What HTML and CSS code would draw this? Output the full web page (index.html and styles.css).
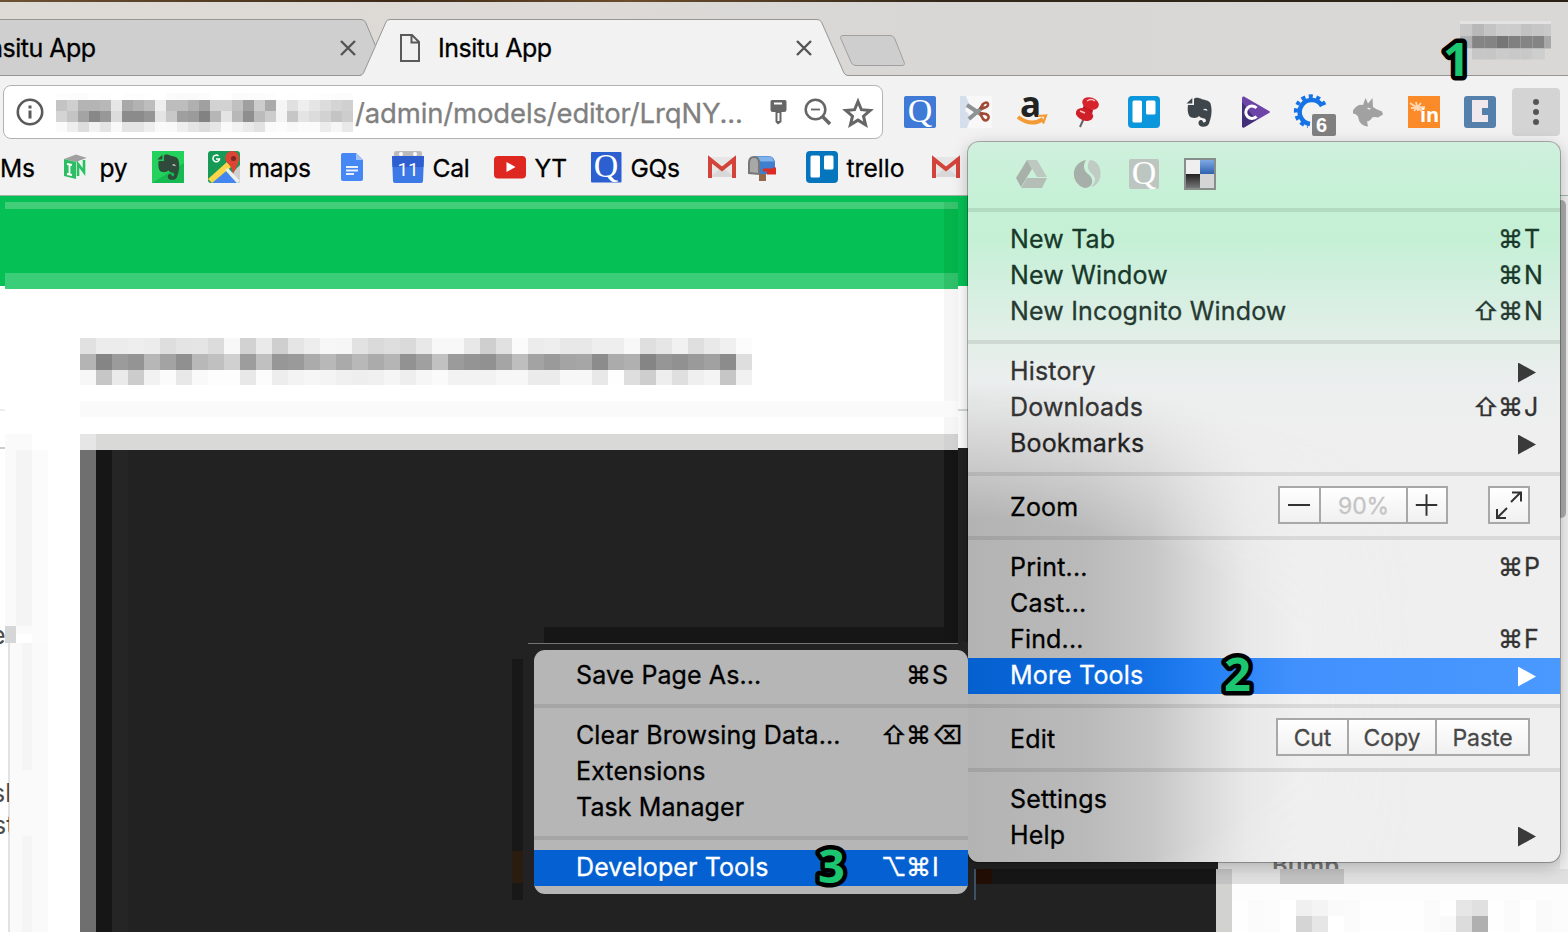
FILE: index.html
```html
<!DOCTYPE html>
<html lang="en">
<head>
<meta charset="utf-8">
<title>Insitu App</title>
<link rel="stylesheet" href="styles.css">
</head>
<body>
<svg class="defs" width="0" height="0">
  <defs>
    <symbol id="gmail" viewBox="0 0 32 32"><rect x="3" y="6" width="26" height="20" fill="#e6e6e6"/><path d="M4 26 L16 16 L28 26Z" fill="#d8d8d8"/><path d="M4 27V8.500l12 9.500L28 8.500v18.500" fill="none" stroke="#d3433a" stroke-width="4"/></symbol>
    <symbol id="trello" viewBox="0 0 32 32"><rect width="32" height="32" rx="4" fill="currentColor"/><rect x="4.500" y="4.500" width="9.500" height="22" rx="1.500" fill="#fff"/><rect x="18" y="4.500" width="9.500" height="14" rx="1.500" fill="#fff"/></symbol>
    <symbol id="elephant" viewBox="0 0 32 32"><path d="M9 3v6H3C2 15 3.500 21 6.500 21.500c3 .8 6 .4 7.500-1.500 1.500 2 3.500 2 5.500 2.500 2 .8 2 4-.5 4-1.500 0-1-3-3.500-2.500-3 .6-2.500 6 .8 6.500 3 .6 6.700 0 7.700-3C26.500 21 27.500 14 25.500 7.500 24.500 4.500 20 4 17 3.200 14 1.500 10 1 9 3Z"/><path d="M1.500 7.500 7.300 2v5.500Z"/><path d="M18 14c2-2 4-1.500 4.500 1-1.500-.8-3-.8-4.500-1Z" fill="#eee"/></symbol>
  </defs>
</svg>
<div class="browser">
  <div class="desktop"></div>
  <div class="tabstrip">
    <svg class="tab-shapes" width="1568" height="74" viewBox="0 2 1568 74">
      <path d="M-2 19.500H361Q364 19.500 365.500 22L388 75.500H-2Z" fill="#cfcfcf" stroke="#969696"/>
      <path d="M359 76.500Q362 76 363.500 73L386 22Q387 19.500 390 19.500H817Q820 19.500 821.500 22L844 73Q845.500 75.500 848 75.500H1568V78H359Z" fill="#f2f2f2"/>
      <path d="M0 75.500H359Q362 75.500 363.500 73L386 22Q387 19.500 390 19.500H817Q820 19.500 821.500 22L844 73Q845.500 75.500 848 75.500H1568" fill="none" stroke="#959595"/>
      <path d="M843 35.500H890Q893 35.500 894.500 38L904 62Q905.500 65.500 902 65.500H856Q853 65.500 851.500 63L841 39Q839.500 35.500 843 35.500Z" fill="#cecece" stroke="#a0a0a0"/>
      <path d="M341 41l14 14M355 41l-14 14M797 41l14 14M811 41l-14 14" stroke="#555" stroke-width="2.400"/>
      <path d="M401 35H412L419 42V61H401ZM411.500 35V42.500H419" fill="none" stroke="#5a5a5a" stroke-width="2"/>
    </svg>
    <span class="tab tab-back">Insitu App</span>
    <span class="tab tab-front">Insitu App</span>
    <svg class="profile" width="92" height="42" data-w="12.1"><rect y="0" width="91" height="3" fill="#e3e3e3"/>
      <g data-y="3" data-h="12" data-shades="c8 b8 c4 cc cc c2 c6"></g><rect x="84" y="3" width="7" height="12" fill="#c9c9c9"/>
      <g data-y="15" data-h="12.5" data-shades="b0 84 84 76 80 84 84"></g><rect x="84" y="15" width="7" height="12.500" fill="#a8a8a8"/>
      <g data-y="27.5" data-h="11" data-shades="d8 c6 c6 cb c8 c8 ce"></g></svg>
  </div>
  <div class="toolbar">
    <div class="omnibox">
      <svg width="28" height="28" viewBox="0 0 28 28"><circle cx="14" cy="14" r="12.200" fill="none" stroke="#5a5a5a" stroke-width="2.600"/><path d="M12.500 7.500h3v3h-3zM12.500 12.500h3v8h-3z" fill="#5a5a5a"/></svg>
      <svg class="host" width="297" height="40" data-w="11">
        <g data-y="0" data-h="7" data-shades="fd fc fc fe fd ff fd fd fe ff fb fa fa fc ff fe fb fb fc fd ff fe ff fe fd fc fc"></g>
        <g data-y="7" data-h="11" data-shades="c4 cf b4 b4 b8 e6 a8 b2 bd ee bd bd b0 a0 d2 d2 c0 a0 cc aa f5 e0 ee e5 dc d4 d0"></g>
        <g data-y="18" data-h="11" data-shades="d4 c4 a4 88 98 dc 8b 8b 95 e4 c8 9f 9b 82 b6 e4 b8 8e bb cc f4 c6 e4 dc d2 c4 cd"></g>
        <g data-y="29" data-h="10" data-shades="fb ee dd f2 e4 f9 e4 e4 ee fa f9 ee e4 dc e6 fa f2 ea e2 fa fc f8 fb fb ec f6 e9"></g></svg>
      <span class="url">/admin/models/editor/LrqNY...</span>
      <svg class="omni-icons" width="110" height="32" viewBox="766 97 110 32">
        <path d="M771 100h14q1.500 0 1.500 1.500v8q0 2.500-2.500 2.500h-2.500v10l-3.500 2.500-2.500-2.500v-10h-2.500q-2.500 0-2.500-2.500v-8q0-1.500 1.500-1.500Z" fill="#666"/><path d="M774 103.500h8M778.500 113v8" stroke="#fff" stroke-width="2"/>
        <circle cx="815.500" cy="109.500" r="9.800" fill="none" stroke="#666" stroke-width="2.500"/><path d="M822.500 116.500l7.500 7.500" stroke="#666" stroke-width="3.500"/><path d="M811 109.500h9" stroke="#666" stroke-width="1.800"/>
        <path d="M858 101.500l3.400 8.200 8.800.7-6.700 5.800 2.100 8.600-7.600-4.700-7.600 4.700 2.100-8.600-6.700-5.800 8.800-.7Z" fill="none" stroke="#666" stroke-width="3"/>
      </svg>
    </div>
    <svg class="ext" viewBox="0 0 32 32"><rect width="32" height="32" rx="2" fill="#3f7ad6"/><text x="16" y="25.500" text-anchor="middle" class="serif-q">Q</text></svg>
    <svg class="ext" viewBox="0 0 32 32"><rect width="32" height="32" fill="#f8f8f8"/><path d="M0 0h6l3 8-4 6 6 7-4 11H0Z" fill="#d5dfec"/><path d="M7 9l15 10M9 23l15-13" stroke="#8d9295" stroke-width="4"/><path d="M20 17l6 1q4 2 2 5t-5 0l-3-6M20 13l3-5q4-3 5 0t-7 5" fill="none" stroke="#a24a35" stroke-width="2.600"/></svg>
    <svg class="ext" viewBox="0 0 32 32"><text x="14.500" y="20.500" text-anchor="middle" class="amazon">a</text><path d="M2 21q13 10 25 2" fill="none" stroke="#f39a34" stroke-width="4"/><path d="M22 20l8-.5-3 8" fill="none" stroke="#f39a34" stroke-width="2.200"/></svg>
    <svg class="ext" viewBox="0 0 32 32"><path d="M12 22L8 31" stroke="#666" stroke-width="2"/><path d="M12 9l9 5-2 8-10-6Z" fill="#b81420"/><ellipse cx="12.500" cy="18.500" rx="9" ry="6" transform="rotate(22 12.500 18.500)" fill="#cf2029"/><ellipse cx="18.500" cy="7.500" rx="8.500" ry="6" transform="rotate(18 18.500 7.500)" fill="#d7232c"/><path d="M15 5q4-3 8 0M8 15l5 2" fill="none" stroke="#ffc3c3" stroke-width="1.500"/></svg>
    <svg class="ext blue"><use href="#trello"/></svg>
    <svg class="ext slate" viewBox="-1 0 32 32"><use href="#elephant" width="32" height="32"/></svg>
    <svg class="ext" viewBox="0 0 32 32"><path d="M2 2q0-2 2-1.500L29 15q2 1 0 2L4 31.500q-2 .5-2-1.500Z" fill="#6d44a8"/><path d="M2 6V30q0 2 2 1.500L16 24Z" fill="#432f78"/><path d="M16.500 12a6.200 6.200 0 1 0 0 8.500" fill="none" stroke="#fff" stroke-width="3"/></svg>
    <svg class="ext" viewBox="0 0 32 32"><path d="M26 10A12 12 0 1 0 14 28" fill="none" stroke="#1673e6" stroke-width="4.500"/><path d="M28.500 9A15 15 0 1 0 12 30" fill="none" stroke="#1673e6" stroke-width="4" stroke-dasharray="4 3.500"/><rect x="16" y="18" width="24" height="22" rx="2" fill="#808080"/><text x="25.500" y="36" text-anchor="middle" class="badge">6</text></svg>
    <svg class="ext" viewBox="0 0 32 32"><path d="M1 14.500Q5 8 11 9L13.500 2l2.500 5.500L20.500 2l.5 9q3 2.500 9 4.500l1 3-5 3q-3-1-6 0-1 3-5 4l1 5q-9-1-10-10Q4 17.500 1 17.500Z" fill="#a1a1a1"/><path d="M15 12.500q2-1.500 4 .5-2 1-4-.5Z" fill="#eee"/></svg>
    <svg class="ext" viewBox="0 0 32 32"><rect width="32" height="32" fill="#fb8a29"/><text x="21.500" y="26" text-anchor="middle" class="inmark">in</text><path d="M2 7l12 8M6 15l7-8M3 12l14-1M8 6l2 9" stroke="#ffd9b4" stroke-width="1.800"/></svg>
    <svg class="ext" viewBox="0 0 32 32"><rect width="32" height="32" rx="3" fill="#5580ab"/><path d="M8 4H24V12H18V19H24V26H8Z" fill="#f1e8ee"/></svg>
    <div class="menu-button"><i></i><i></i><i></i></div>
  </div>
  <div class="bookmarks">
    <span class="bm">Ms</span>
    <span class="bm"><svg viewBox="0 0 32 32"><path d="M5 8L17 3.500l11 3.500-11 4Z" fill="#a0a0a0"/><path d="M5 8l12 3v17L5 25Z" fill="#2dbd62"/><path d="M17 11l11-4v16l-11 5Z" fill="#e9f7ee"/><path d="M8 13l5 1M10.500 14v9M8 23l5 1" stroke="#fff" stroke-width="1.800"/><path d="M19 25V13l6 8V9" fill="none" stroke="#2dbd62" stroke-width="2.600"/></svg>py</span>
    <span class="bm"><svg viewBox="0 0 32 32"><rect width="32" height="32" fill="#25d15d"/><path d="M0 32L32 12V32Z" fill="#15bb50"/><svg x="4" y="2" width="28" height="28" class="dark"><use href="#elephant"/></svg></svg></span>
    <span class="bm"><svg viewBox="0 0 32 32"><rect width="32" height="32" rx="3" fill="#179a56"/><path d="M32 14L14 32H29Q32 32 32 29Z" fill="#cfcfcf"/><path d="M16 18L29 32H3Z" fill="#4386f0"/><path d="M0 28L19 11l4 5L4 32Z" fill="#f9d648"/><path d="M17 19l12 13 3-2-12-13Z" fill="#eee"/><path d="M25 23q-1-7-4.500-10A7 7 0 1 1 31 9q-1 5-6 14Z" fill="#dc4436"/><circle cx="25.500" cy="7.500" r="2.500" fill="#7a2820"/><path d="M10.500 5A3.300 3.300 0 1 0 11.500 8H8" fill="none" stroke="#fff" stroke-width="1.500"/></svg>maps</span>
    <span class="bm"><svg viewBox="0 0 32 32"><path d="M7 2H20l7 7V28q0 2-2 2H7q-2 0-2-2V4q0-2 2-2Z" fill="#4587f4"/><path d="M20 2v7h7Z" fill="#a3c3f8"/><path d="M10 16h12M10 19.500h12M10 23h8" stroke="#e8f0fe" stroke-width="1.800"/></svg></span>
    <span class="bm"><svg viewBox="0 0 32 32"><rect x="2" width="28" height="7" rx="2" fill="#bcbcbc"/><path d="M0 5H32L31 30q0 2-2 2H3q-2 0-2-2Z" fill="#3c78e6"/><path d="M0 5H32L31.500 16H.5Z" fill="#2d5fd0"/><circle cx="9" cy="3" r="2" fill="#fff"/><circle cx="23" cy="3" r="2" fill="#fff"/><text x="16" y="25" text-anchor="middle" class="date">11</text></svg>Cal</span>
    <span class="bm"><svg viewBox="0 0 32 32"><rect y="5" width="32" height="22.500" rx="4" fill="#de2721"/><path d="M12.500 11v10l9-5Z" fill="#fff"/></svg>YT</span>
    <span class="bm"><svg viewBox="0 0 32 32"><rect x="1" y="1" width="30.500" height="30.500" rx="1" fill="#2c5fcf"/><text x="16" y="25.500" text-anchor="middle" class="serif-q">Q</text></svg>GQs</span>
    <span class="bm"><svg><use href="#gmail"/></svg><svg class="mailbox" viewBox="0 0 32 32"><path d="M12 22h7v8h-7Z" fill="#94694a"/><path d="M7 5H21q7 0 7 8v10H12Z" fill="#3f7fcd"/><path d="M8 5.500H21q5 0 6 5H14Z" fill="#7fb2ea"/><path d="M1 23V12q0-7 6-7t6 7V24Z" fill="#777"/><path d="M3 21V12q0-5 4-5t4 5v10Z" fill="#a8a8a8"/><path d="M16 17.500h10v-1h3v7H20v-3h-4Z" fill="#dd2a22"/></svg></span>
    <span class="bm"><svg class="deep"><use href="#trello"/></svg>trello</span>
    <span class="bm"><svg><use href="#gmail"/></svg></span>
  </div>
  <div class="page">
    <svg class="content" width="1568" height="736" viewBox="0 196 1568 736" shape-rendering="crispEdges">
      <rect y="196" width="1568" height="90" fill="#05c155"/>
      <rect x="944" y="202" width="14" height="71" fill="#04b54b"/>
      <rect x="5" y="202" width="953" height="7" fill="#42ce79"/><rect x="944" y="202" width="14" height="7" fill="#38c26d"/>
      <rect x="5" y="273" width="953" height="16" fill="#3bce78"/><rect x="944" y="273" width="14" height="16" fill="#30c069"/>
      <rect x="944" y="289" width="14" height="145" fill="#f6f6f6"/>
      <rect x="80" y="401" width="878" height="16" fill="#fafafa"/>
      <rect y="409" width="5" height="2" fill="#eee"/><rect y="447" width="5" height="2" fill="#ccc"/><rect x="958" y="409" width="10" height="2" fill="#d8d8d8"/>
      <rect x="5" y="434" width="27" height="200" fill="#fafafa"/><rect x="16" y="450" width="16" height="176" fill="#f4f4f4"/><rect x="32" y="450" width="16" height="482" fill="#fbfbfb"/>
      <rect x="10" y="643" width="38" height="289" fill="#fafafa"/><rect x="22" y="643" width="10" height="127" fill="#f5f5f5"/><rect x="22" y="836" width="10" height="96" fill="#f5f5f5"/><rect x="8" y="643" width="2" height="289" fill="#e2e2e2"/>
      <rect x="80" y="434" width="878" height="16" fill="#d9d9d8"/><rect x="80" y="434" width="16" height="16" fill="#e6e6e6"/><rect x="944" y="434" width="14" height="16" fill="#d2d2d2"/>
      <rect x="80" y="450" width="1138" height="482" fill="#222"/><rect x="958" y="448" width="260" height="484" fill="#222"/>
      <rect x="80" y="450" width="16" height="482" fill="#6f6f6f"/><rect x="96" y="450" width="16" height="482" fill="#161616"/><rect x="112" y="450" width="16" height="482" fill="#252525"/>
      <rect x="944" y="450" width="14" height="193" fill="#151515"/>
      <rect x="544" y="627" width="400" height="16" fill="#161616"/><rect x="528" y="643" width="430" height="1" fill="#747474"/>
      <rect x="512" y="659" width="11" height="241" fill="#181818"/><rect x="512" y="851" width="11" height="32" fill="#2a1c0e"/>
      <rect x="974" y="869" width="242" height="15" fill="#161616"/><rect x="976" y="869" width="16" height="15" fill="#230e05"/><rect x="974" y="869" width="1.500" height="31" fill="#3d5267"/>
      <rect x="1218" y="450" width="350" height="482" fill="#fff"/><rect x="1218" y="855" width="350" height="14" fill="#e4e4e4"/>
      <rect x="1560" y="196" width="8" height="673" fill="#efefef"/>
      <text x="1272" y="874" class="bump" shape-rendering="auto">Bump</text>
      <rect x="1216" y="869" width="352" height="15" fill="#e0e0e0"/><rect x="1280" y="869" width="64" height="15" fill="#c2c2c2"/><rect x="1216" y="884" width="352" height="48" fill="#fdfdfd"/><rect x="1216" y="869" width="16" height="63" fill="#d2d2d1"/><rect x="1216" y="869" width="16" height="15" fill="#c3c3c3"/>
      <g data-w="16" data-x="1232" data-y="900" data-h="16" data-shades="fe fb fc ff f0 f4 fa fb fe fe fe fe fb fe e6 e0 fe fb ff fa fc"></g>
      <g data-w="16" data-x="1232" data-y="916" data-h="16" data-shades="fe fb fc ff d5 e6 ff fb fe fe fe fe fb f9 dc b0 fe fb ff fa fc"></g>
      <g data-w="16" data-x="80" data-y="338" data-h="16" data-shades="e1 ec ec ee ec de e4 e5 dc f8 d2 ea cf e5 ed f7 f6 e2 da de da e8 f8 f8 e8 cf e1 fb ec ee e8 e8 ee ee f8 df e6 f1 df e9 f0 fc"></g>
      <g data-w="16" data-x="80" data-y="354" data-h="16" data-shades="b4 85 9b 94 b7 a3 90 b8 c0 d0 9d c0 97 9a ab b8 aa b8 ab b5 92 a0 c1 9b 94 91 a5 be a3 9a a4 a6 8c ab b0 85 96 91 9a a1 8c de"></g>
      <g data-w="16" data-x="80" data-y="370" data-h="15" data-shades="f7 c6 ea cc f2 fb e8 f9 fd fd e8 fc ed f3 f6 f4 f0 ee f0 f5 ee f6 fa f2 f2 f2 f7 f7 eb eb f7 f7 e8 fe de ce ee df ef f4 c6 f1"></g>
      <text x="-9" y="644" class="side">e</text><rect x="5" y="626" width="11" height="17" fill="#d6d6d6"/>
      <svg x="0" y="770" width="9" height="80"><text x="-8" y="32" class="side">sk</text><text x="-7" y="64" class="side">st</text></svg>
      <rect x="1556" y="200" width="10" height="318" rx="5" fill="#acacac" shape-rendering="auto"/>
    </svg>
  </div>
</div>

<div class="menu main-menu">
  <div class="menu-icons">
    <svg viewBox="0 0 32 32"><path d="M11 2h10l10 17H21Z" fill="#bcc8c0"/><path d="M11 2l5 9L5 29 0 20Z" fill="#a7b1aa"/><path d="M11 20h20l-5 10H5Z" fill="#b4beb7"/></svg>
    <svg viewBox="0 0 32 32"><path d="M14 2C-2 5-2 26 13 30c9-1 9-10 3-14-5-4-5-9-2-14Z" fill="#a6afa9"/><path d="M18 2c14 1 14 25 1 27 6-6 5-10 0-14-4-4-4-9-1-13Z" fill="#c0cbc4"/></svg>
    <svg viewBox="0 0 32 32"><rect x="1" y="1" width="30" height="30" rx="2" fill="#bdc5c0"/><text x="16" y="25.500" text-anchor="middle" class="serif-q">Q</text></svg>
    <svg viewBox="0 0 32 32"><defs><linearGradient id="dk" x2="0" y2="1"><stop stop-color="#222"/><stop offset="1" stop-color="#777"/></linearGradient><linearGradient id="bl" x2="0" y2="1"><stop stop-color="#7fa9e4"/><stop offset="1" stop-color="#2f62ae"/></linearGradient></defs><rect width="32" height="32" fill="#878f8b"/><rect x="2" y="2" width="14" height="14" fill="#efefef"/><rect x="16" y="2" width="14" height="14" fill="url(#bl)"/><rect x="2" y="16" width="14" height="14" fill="url(#dk)"/><rect x="16" y="16" width="14" height="14" fill="#d5d5d5"/></svg>
  </div>
  <div class="group">
    <div class="item g1"><span>New Tab</span><kbd><b></b><b>⌘</b><i>T</i></kbd></div>
    <div class="item g1"><span>New Window</span><kbd><b></b><b>⌘</b><i>N</i></kbd></div>
    <div class="item g2"><span>New Incognito Window</span><kbd><b>⇧</b><b>⌘</b><i>N</i></kbd></div>
  </div>
  <div class="group">
    <div class="item g3"><span>History</span><u></u></div>
    <div class="item g3"><span>Downloads</span><kbd><b>⇧</b><b>⌘</b><i>J</i></kbd></div>
    <div class="item g4"><span>Bookmarks</span><u></u></div>
  </div>
  <div class="group wide">
    <div class="item"><span>Zoom</span>
      <div class="buttons zoom"><svg viewBox="0 0 39 34"><path d="M8 17H30" stroke="#333" stroke-width="2"/></svg><em class="pct">90%</em><svg viewBox="0 0 39 34"><path d="M8 17H30M19 6V28" stroke="#333" stroke-width="2"/></svg></div>
      <div class="buttons full"><svg viewBox="0 0 38 34"><path d="M21 14L31 4M22 4.500h9v9M17 20L7 30M7 21v9h9" fill="none" stroke="#333" stroke-width="2"/></svg></div>
    </div>
  </div>
  <div class="group">
    <div class="item"><span>Print...</span><kbd><b></b><b>⌘</b><i>P</i></kbd></div>
    <div class="item"><span>Cast...</span></div>
    <div class="item"><span>Find...</span><kbd><b></b><b>⌘</b><i>F</i></kbd></div>
    <div class="item active"><span>More Tools</span><u></u></div>
  </div>
  <div class="group wide">
    <div class="item"><span>Edit</span>
      <div class="buttons edit"><em class="w1">Cut</em><em class="w2">Copy</em><em class="w3">Paste</em></div>
    </div>
  </div>
  <div class="group">
    <div class="item"><span>Settings</span></div>
    <div class="item"><span>Help</span><u></u></div>
  </div>
</div>

<div class="menu sub-menu">
  <div class="group">
    <div class="item"><span>Save Page As...</span><kbd><b></b><b>⌘</b><i>S</i></kbd></div>
  </div>
  <div class="group">
    <div class="item"><span>Clear Browsing Data...</span><kbd><b>⇧</b><b>⌘</b><i>⌫</i></kbd></div>
    <div class="item"><span>Extensions</span></div>
    <div class="item"><span>Task Manager</span></div>
  </div>
  <div class="group">
    <div class="item active"><span>Developer Tools</span><kbd><b>⌥</b><b>⌘</b><i>I</i></kbd></div>
  </div>
</div>

<svg class="callouts" width="1568" height="932">
  <text x="1443" y="76">1</text>
  <text x="1224" y="691">2</text>
  <text x="818" y="883">3</text>
</svg>
<script src="mosaic.js"></script>
</body>
</html>
```
FILE: mosaic.js
```js
// Fills each mosaic row with one rect per grey shade.
document.querySelectorAll("g[data-shades]").forEach(function (row) {
  var w = parseFloat(row.dataset.w || row.parentNode.dataset.w);
  var x0 = parseFloat(row.dataset.x || 0);
  row.dataset.shades.split(" ").forEach(function (s, i) {
    var r = document.createElementNS("http://www.w3.org/2000/svg", "rect");
    r.setAttribute("x", x0 + i * w);
    r.setAttribute("y", row.dataset.y);
    r.setAttribute("width", w);
    r.setAttribute("height", row.dataset.h);
    r.setAttribute("fill", "#" + s + s + s);
    row.appendChild(r);
  });
});
```
FILE: styles.css
```css
* { box-sizing: border-box; }
body { margin: 0; width: 1568px; height: 932px; overflow: hidden; position: relative; background: #f2f2f2; font-family: Inter, "Liberation Sans", sans-serif; font-size: 25px; color: #000; -webkit-text-stroke: .3px; }
svg { display: block; flex: none; -webkit-text-stroke: 0; }
.defs { position: absolute; }
.browser { display: flex; flex-direction: column; height: 932px; }
.desktop { height: 2px; background: linear-gradient(90deg, #6d5233, #3d2a17 25%, #6b4c2b 40%, #33281a 60%, #2b2215); }
.tabstrip { height: 74px; position: relative; display: flex; align-items: center; background: linear-gradient(90deg, #dedad5, #dddad7 35%, #d8d7d5 60%, #d9d8d6); }
.tab-shapes { position: absolute; left: 0; top: 0; overflow: visible; }
.tab { position: relative; margin-top: 17px; white-space: nowrap; letter-spacing: -.5px; }
.tab-back { margin-left: -18px; width: 456px; }
.tab-front { width: 1022px; }
.profile { position: relative; margin-top: 6px; }
.toolbar { height: 72px; padding: 9px 8px 0 3px; display: flex; align-items: flex-start; background: #f2f2f2; position: relative; }
.omnibox { width: 880px; height: 54px; border: 1px solid #b2b2b2; border-radius: 8px; background: #fff; display: flex; align-items: center; padding-left: 12px; margin-right: 21px; }
.host { margin-left: 12px; margin-top: 1px; }
.url { width: 411px; margin-top: 1px; padding-left: 2px; font-size: 27.5px; letter-spacing: -.15px; color: #808080; white-space: nowrap; }
.omni-icons { margin-left: 2px; margin-top: 2px; }
.ext { width: 32px; height: 32px; margin: 11px 24px 0 0; overflow: visible; }
.blue { color: #0c96dc; }
.deep { color: #0576bd; }
.slate { fill: #3f464b; }
.dark { fill: #2f4a3a; }
.menu-button { width: 48px; height: 48px; margin-top: 3px; margin-left: -8px; border-radius: 4px; background: #d4d4d4; display: flex; flex-direction: column; align-items: center; justify-content: center; gap: 4px; }
.menu-button i { width: 6px; height: 6px; border-radius: 50%; background: #555; }
.bookmarks { height: 48px; padding-bottom: 9px; border-bottom: 1px solid #9fb5a6; background: #f2f2f2; display: grid; grid-template-columns: 59px 93px 56px 128px 56px 102px 96px 116px 100px 124px 60px; }
.bm { display: flex; align-items: center; gap: 8.5px; white-space: nowrap; font-size: 24.6px; letter-spacing: -.3px; padding-top: 1px; }
.bm:nth-child(10) { letter-spacing: 0; }
.bm > svg { width: 32px; height: 32px; margin-top: -1px; }
.serif-q { font: 34px "Liberation Serif", serif; fill: #fff; letter-spacing: 0; }
.amazon { font: 700 35px "Open Sans", sans-serif; fill: #222; }
.badge { font: bold 20px "Liberation Sans", sans-serif; fill: #fff; }
.inmark { font: bold 20px "Open Sans", sans-serif; fill: #fff; }
.date { font: 19px Roboto, sans-serif; fill: #fff; }
.page { height: 736px; background: #fff; }
.bump { font: 600 24px Inter, sans-serif; fill: #777; }
.side { font: 25px Inter, sans-serif; fill: #4b4b4b; }

.menu { position: absolute; border-radius: 11px; overflow: hidden; letter-spacing: .17px; }
.main-menu { left: 968px; top: 142px; width: 592px; height: 720px; background: linear-gradient(180deg, #cff0dd 0, #c5f1d6 60px, #c6f0d6 100px, #d2efdf 140px, #e1efe7 190px, #ebeeee 240px, #efefef 290px); }
.main-menu::before { content: ""; position: absolute; inset: 0; background: linear-gradient(90deg, #b3b3b3, #bababa 20%, #c6c6c6 31%, #dadada 40%, #e8e8e8 47%, #efefef 56%, rgba(239,239,239,0) 75%); mask-image: radial-gradient(ellipse 760px 400px at 0 560px, #000 46%, transparent 80%); }
.main-menu > * { position: relative; }
body::after { content: ""; position: absolute; left: 968px; top: 142px; width: 592px; height: 720px; border-radius: 11px; box-shadow: 0 0 0 1px rgba(0,0,0,.28), 0 4px 16px rgba(0,0,0,.25); pointer-events: none; clip-path: polygon(-40px -40px, 640px -40px, 640px 780px, 0 780px, 0 500px, -40px 500px); }
.sub-menu { left: 534px; top: 650px; width: 434px; height: 244px; background: #b6b6b6; letter-spacing: .1px; }
.menu-icons { height: 66px; padding: 16px 0 0 48px; display: flex; gap: 24px; }
.menu-icons svg { width: 32px; height: 32px; }
.group { padding: 10px 0; border-top: 4px solid rgba(0,0,0,.09); }
.wide { padding: 12px 0; }
.sub-menu .group:first-child { border: 0; padding-top: 8px; }
.item { height: 36px; padding-left: 42px; display: flex; align-items: center; line-height: 34px; white-space: nowrap; }
.item span { flex: 1; margin-top: -2px; }
.wide .item span { margin-top: 2px; }
.g1 { color: #18392a; }
.g2 { color: #263a32; }
.g3 { color: #333; }
.g4 { color: #222; }
.item kbd { font: inherit; display: flex; width: 87px; margin-top: -2px; color: #333; -webkit-text-stroke-width: .3px; }
.g1 kbd, .g2 kbd { color: inherit; }
.sub-menu kbd { color: #000; }
.item kbd b { font-weight: 400; width: 25px; text-align: center; }
.item kbd i { font-style: normal; margin-left: 1px; }
.item u { width: 18px; height: 20px; margin-right: 24px; margin-top: 1px; background: #3a3a3a; clip-path: polygon(0 0, 100% 50%, 0 100%); }
.active { color: #fff; background: linear-gradient(90deg, #0560cf, #0d6bdf 25%, #2480f4 40%, #4190fd 55%, #4a99ff); }
.sub-menu .active { background: #0561d1; }
.sub-menu .active kbd { color: #fff; }
.active u { background: #fff; }
.buttons { height: 38px; margin-top: -2px; border: 2px solid #a8a8a8; display: flex; background: linear-gradient(#fff, #f0f0f0); }
.buttons em { font-style: normal; font-size: 23px; line-height: 37px; letter-spacing: -.1px; color: #484848; text-align: center; }
.buttons > * + * { border-left: 2px solid #a8a8a8; }
.zoom { width: 170px; margin-right: 40px; }
.zoom svg { width: 39px; height: 34px; }
.zoom svg:last-child { width: 40px; }
.buttons .pct { width: 88px; color: #c4c4c4; }
.full { width: 42px; margin-right: 30px; }
.full svg { width: 38px; height: 34px; }
.edit { width: 254px; margin-right: 30px; }
.w1 { width: 69px; }
.w2 { width: 88px; }
.w3 { width: 93px; }
.callouts { position: absolute; left: 0; top: 0; z-index: 5; }
.callouts text { font: bold 47px "Noto Sans", sans-serif; fill: #1cc670; stroke: #000; stroke-width: 9px; stroke-linejoin: round; paint-order: stroke; }
```
